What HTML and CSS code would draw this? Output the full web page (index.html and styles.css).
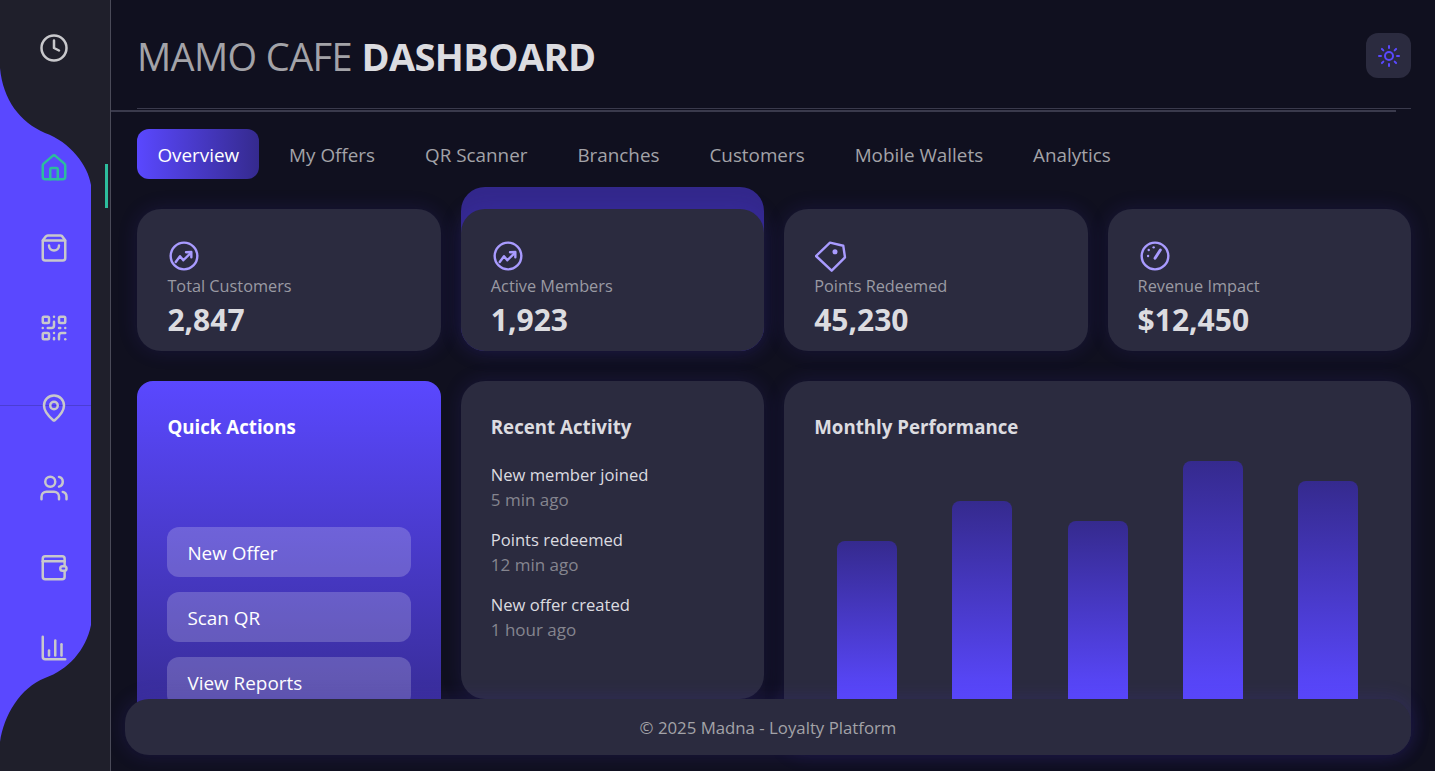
FILE: index.html
```html
<!DOCTYPE html>
<html lang="en">
<head>
    <meta charset="UTF-8">
    <meta name="viewport" content="width=device-width, initial-scale=1.0">
    <title>Mamo Cafe Dashboard</title>
    <link rel="stylesheet" href="styles.css">
</head>
<body>
    <aside class="sidebar">
        <svg class="sidebar-wave" viewBox="0 0 91 771" width="91" height="771">
            <path d="M0 68C3 100 20 122 45 133C70 142 88 165 91 185V625C86 650 68 670 45 678C20 688 4 715 0 742V68Z"/>
        </svg>
        <div class="sidebar-rule"></div>
        <nav class="sidebar-nav">
            <a class="nav-icon clock-icon">
                <svg viewBox="0 0 24 24"><circle cx="12" cy="12" r="10"/><path d="M12 6v6l4 2"/></svg>
            </a>
            <a class="nav-icon is-active">
                <svg viewBox="0 0 24 24"><path d="M15 21v-8a1 1 0 0 0-1-1h-4a1 1 0 0 0-1 1v8"/><path d="M3 10a2 2 0 0 1 .709-1.528l7-5.999a2 2 0 0 1 2.582 0l7 5.999A2 2 0 0 1 21 10v9a2 2 0 0 1-2 2H5a2 2 0 0 1-2-2z"/></svg>
            </a>
            <a class="nav-icon">
                <svg viewBox="0 0 24 24"><path d="M16 10a4 4 0 0 1-8 0"/><path d="M3.103 6.034h17.794"/><path d="M3.4 5.467a2 2 0 0 0-.4 1.2V20a2 2 0 0 0 2 2h14a2 2 0 0 0 2-2V6.667a2 2 0 0 0-.4-1.2l-2.4-3.2A2 2 0 0 0 17 2H7a2 2 0 0 0-1.6.8z"/></svg>
            </a>
            <a class="nav-icon">
                <svg viewBox="0 0 24 24"><rect x="3" y="3" width="5" height="5" rx="1"/><rect x="16" y="3" width="5" height="5" rx="1"/><rect x="3" y="16" width="5" height="5" rx="1"/><path d="M21 16h-3a2 2 0 0 0-2 2v3"/><path d="M21 21v.01"/><path d="M12 7v3a2 2 0 0 1-2 2H7"/><path d="M3 12h.01"/><path d="M12 3h.01"/><path d="M12 16v.01"/><path d="M16 12h1"/><path d="M21 12v.01"/><path d="M12 21v-1"/></svg>
            </a>
            <a class="nav-icon">
                <svg viewBox="0 0 24 24"><path d="M20 10c0 4.993-5.539 10.193-7.399 11.799a1 1 0 0 1-1.202 0C9.539 20.193 4 14.993 4 10a8 8 0 0 1 16 0"/><circle cx="12" cy="10" r="3"/></svg>
            </a>
            <a class="nav-icon">
                <svg viewBox="0 0 24 24"><path d="M16 21v-2a4 4 0 0 0-4-4H6a4 4 0 0 0-4 4v2"/><path d="M16 3.128a4 4 0 0 1 0 7.744"/><path d="M22 21v-2a4 4 0 0 0-3-3.87"/><circle cx="9" cy="7" r="4"/></svg>
            </a>
            <a class="nav-icon">
                <svg viewBox="0 0 24 24"><rect x="3" y="2.5" width="17.5" height="18.5" rx="2"/><path d="M3 6.5h17.5"/><rect x="17" y="10.5" width="5" height="3.6" rx="1.8" class="wallet-tag"/></svg>
            </a>
            <a class="nav-icon">
                <svg viewBox="0 0 24 24"><path d="M3 3v16a2 2 0 0 0 2 2h16"/><path d="M8 18v-4"/><path d="M13 18V6"/><path d="M18 18V9"/></svg>
            </a>
        </nav>
    </aside>

    <main class="main">
        <header class="header">
            <h1 class="title">MAMO CAFE <strong>DASHBOARD</strong></h1>
            <button class="theme-btn">
                <svg viewBox="0 0 24 24"><circle cx="12" cy="12" r="4"/><path d="M12 2v2"/><path d="M12 20v2"/><path d="m4.93 4.93 1.41 1.41"/><path d="m17.66 17.66 1.41 1.41"/><path d="M2 12h2"/><path d="M20 12h2"/><path d="m6.34 17.66-1.41 1.41"/><path d="m19.07 4.93-1.41 1.41"/></svg>
            </button>
        </header>
        <div class="header-rule"></div>

        <div class="tabs">
            <a class="tab is-active">Overview</a>
            <a class="tab">My Offers</a>
            <a class="tab">QR Scanner</a>
            <a class="tab">Branches</a>
            <a class="tab">Customers</a>
            <a class="tab">Mobile Wallets</a>
            <a class="tab">Analytics</a>
        </div>

        <section class="stats">
            <div class="card stat">
                <svg class="stat-icon" viewBox="0 0 24 24"><circle cx="12" cy="12" r="10"/><path d="M5.8 16.5 9 12.2l2.5 3L17 9.8"/><path d="M13.5 9.2 17.5 9V13"/></svg>
                <div class="stat-label">Total Customers</div>
                <div class="stat-value">2,847</div>
            </div>
            <div class="card stat stat-featured">
                <svg class="stat-icon" viewBox="0 0 24 24"><circle cx="12" cy="12" r="10"/><path d="M5.8 16.5 9 12.2l2.5 3L17 9.8"/><path d="M13.5 9.2 17.5 9V13"/></svg>
                <div class="stat-label">Active Members</div>
                <div class="stat-value">1,923</div>
            </div>
            <div class="card stat">
                <svg class="stat-icon" viewBox="0 0 24 24"><path d="M.75 12 11.25 2 21.2 4.3 22.5 13 12.5 23Z"/><circle cx="15" cy="8.8" r="1" class="icon-dot"/></svg>
                <div class="stat-label">Points Redeemed</div>
                <div class="stat-value">45,230</div>
            </div>
            <div class="card stat">
                <svg class="stat-icon" viewBox="0 0 24 24"><circle cx="12" cy="12" r="10"/><path d="M12 13.7 16 7.5" class="gauge-needle"/><path d="M11 5.5h.01"/><path d="M7.3 7.5h.01"/><path d="M6.8 12h.01"/></svg>
                <div class="stat-label">Revenue Impact</div>
                <div class="stat-value">$12,450</div>
            </div>
        </section>

        <section class="panels">
            <div class="panel panel-actions">
                <h3 class="panel-title">Quick Actions</h3>
                <div class="action-list">
                    <a class="action-btn">New Offer</a>
                    <a class="action-btn">Scan QR</a>
                    <a class="action-btn">View Reports</a>
                </div>
            </div>
            <div class="card panel panel-activity">
                <h3 class="panel-title">Recent Activity</h3>
                <div class="activity-item"><p>New member joined</p><small>5 min ago</small></div>
                <div class="activity-item"><p>Points redeemed</p><small>12 min ago</small></div>
                <div class="activity-item"><p>New offer created</p><small>1 hour ago</small></div>
            </div>
            <div class="card panel panel-chart">
                <h3 class="panel-title">Monthly Performance</h3>
                <div class="bars">
                    <div class="bar" style="height: 158px"></div>
                    <div class="bar" style="height: 198px"></div>
                    <div class="bar" style="height: 178px"></div>
                    <div class="bar" style="height: 238px"></div>
                    <div class="bar" style="height: 218px"></div>
                </div>
            </div>
        </section>

        <footer class="footer">© 2025 Madna - Loyalty Platform</footer>
    </main>
</body>
</html>
```

FILE: styles.css
```css
* {
    box-sizing: border-box;
}

html, body {
    height: 100%;
}

body {
    margin: 0;
    display: flex;
    height: 771px;
    overflow: hidden;
    background: #10101f;
    color: #dcdce0;
    font-family: "Open Sans", "Noto Sans", Arial, sans-serif;
}

/* sidebar */
.sidebar {
    position: relative;
    flex: 0 0 111px;
    height: 771px;
    background: #1f1f2b;
    border-right: 1px solid #4a4a58;
}

.sidebar-wave {
    position: absolute;
    top: 0;
    left: 0;
    fill: #5a48ff;
}

.sidebar-rule {
    position: absolute;
    top: 405px;
    left: 0;
    width: 91px;
    height: 1px;
    background: rgba(30, 30, 80, 0.25);
}

.sidebar-nav {
    position: relative;
    display: flex;
    flex-direction: column;
    align-items: center;
    width: 108px;
    padding-top: 8px;
}

.nav-icon {
    position: relative;
    display: flex;
    align-items: center;
    justify-content: center;
    width: 100%;
    height: 80px;
    color: #c8c8cc;
}

.clock-icon {
    margin-bottom: 40px;
}

.nav-icon svg {
    width: 30px;
    height: 30px;
    fill: none;
    stroke: currentColor;
    stroke-width: 2;
    stroke-linecap: round;
    stroke-linejoin: round;
}

.nav-icon.is-active {
    color: #2dbd9d;
}

.nav-icon.is-active::after {
    content: "";
    position: absolute;
    top: 36px;
    right: 0;
    width: 3px;
    height: 44px;
    background: #2dbd9d;
}

.wallet-tag {
    fill: #5a48ff;
}

/* main area */
.main {
    position: relative;
    flex: 1;
    min-width: 0;
    height: 771px;
    padding-right: 24px;
    overflow: hidden;
}

.header {
    display: flex;
    align-items: center;
    justify-content: space-between;
    height: 108px;
    padding: 3px 0 0 26px;
}

.title {
    margin: 0;
    font-size: 38px;
    font-weight: 400;
    letter-spacing: -0.6px;
    color: #a3a3a8;
}

.title strong {
    font-weight: 700;
    color: #dcdce0;
}

.theme-btn {
    display: flex;
    align-items: center;
    justify-content: center;
    width: 45px;
    height: 45px;
    padding: 0;
    border: none;
    border-radius: 12px;
    background: #2b2b3f;
}

.theme-btn svg {
    width: 24px;
    height: 24px;
    fill: none;
    stroke: #5a48ff;
    stroke-width: 2;
    stroke-linecap: round;
}

.header-rule {
    position: relative;
    height: 4px;
    margin-bottom: 17px;
}

.header-rule::before {
    content: "";
    position: absolute;
    top: 0;
    left: 26px;
    right: 0;
    height: 1px;
    background: #3a3a4c;
}

.header-rule::after {
    content: "";
    position: absolute;
    top: 2px;
    left: 0;
    right: 15px;
    height: 2px;
    background: #3a3a4c;
}

.tabs {
    display: flex;
    gap: 10px;
    margin-left: 26.4px;
    margin-bottom: 30px;
}

.tab {
    display: flex;
    align-items: center;
    height: 50px;
    padding: 1px 20px 0;
    border-radius: 12px;
    font-size: 18.85px;
    color: #a3a3a8;
}

.tab.is-active {
    background: linear-gradient(90deg, #5a48ff, #352a8e);
    color: #fff;
}

/* cards */
.card {
    background: #2b2b3f;
    border-radius: 24px;
    box-shadow: 0 0 20px rgba(70, 50, 200, 0.16);
}

.stats {
    display: grid;
    grid-template-columns: repeat(4, 1fr);
    gap: 20px;
    margin-left: 26.4px;
    margin-bottom: 30px;
}

.stat {
    position: relative;
    height: 142px;
    padding: 31px 30px 0;
}

.stat-featured {
    box-shadow: 0 0 20px rgba(70, 50, 200, 0.28);
}

.stat-featured::before {
    content: "";
    position: absolute;
    z-index: -1;
    top: -22px;
    bottom: 0;
    left: 0;
    right: 0;
    background: #33288c;
    border-radius: 24px;
}

.stat-icon {
    display: block;
    width: 32px;
    height: 32px;
    margin-left: 1px;
    fill: none;
    stroke: #a99bff;
    stroke-width: 1.8;
    stroke-linecap: round;
    stroke-linejoin: round;
}

.icon-dot {
    fill: #a99bff;
}

.gauge-needle {
    stroke-width: 2.2;
}

.stat-label {
    margin-top: 1px;
    font-size: 16.3px;
    line-height: 26px;
    color: #9a9aa3;
}

.stat-value {
    margin-top: 1px;
    font-size: 30px;
    font-weight: 700;
    line-height: 40px;
    color: #dcdce0;
}

.panels {
    display: grid;
    grid-template-columns: repeat(4, 1fr);
    align-items: start;
    gap: 20px;
    margin-left: 26.4px;
}

.panel {
    padding: 30px;
}

.panel-title {
    margin: 0;
    font-size: 18.7px;
    font-weight: 700;
    line-height: 32px;
    color: #dcdce0;
}

.panel-actions {
    height: 356px;
    border-radius: 16px;
    background: linear-gradient(180deg, #5a48ff, #352a8e);
}

.panel-actions .panel-title {
    color: #fff;
}

.action-list {
    display: flex;
    flex-direction: column;
    gap: 15px;
    margin-top: 84px;
}

.action-btn {
    display: flex;
    align-items: center;
    height: 50px;
    padding: 1px 20px 0;
    border-radius: 12px;
    background: rgba(255, 255, 255, 0.2);
    font-size: 18.9px;
    color: #fff;
}

.panel-activity {
    height: 318px;
}

.activity-item {
    height: 65px;
}

.panel-title + .activity-item {
    margin-top: 19px;
}

.activity-item p {
    margin: 0;
    font-size: 16.6px;
    line-height: 25px;
    color: #dcdce0;
}

.activity-item small {
    display: block;
    font-size: 17px;
    line-height: 25px;
    color: #85858f;
}

.panel-chart {
    grid-column: span 2;
    height: 374px;
}

.bars {
    display: flex;
    align-items: flex-end;
    justify-content: space-around;
    gap: 10px;
    height: 256px;
}

.bar {
    width: 60px;
    border-radius: 8px 8px 0 0;
    background: linear-gradient(180deg, #352a8e, #5a48ff);
}

/* the footer sits over the bottom of the panels */
.footer {
    position: absolute;
    left: 14px;
    right: 24px;
    bottom: 16px;
    height: 56px;
    padding-top: 1px;
    display: flex;
    align-items: center;
    justify-content: center;
    border-radius: 24px;
    background: #2b2b3f;
    box-shadow: 0 0 20px rgba(70, 50, 200, 0.2);
    font-size: 16.8px;
    color: #a3a3a8;
}
```
